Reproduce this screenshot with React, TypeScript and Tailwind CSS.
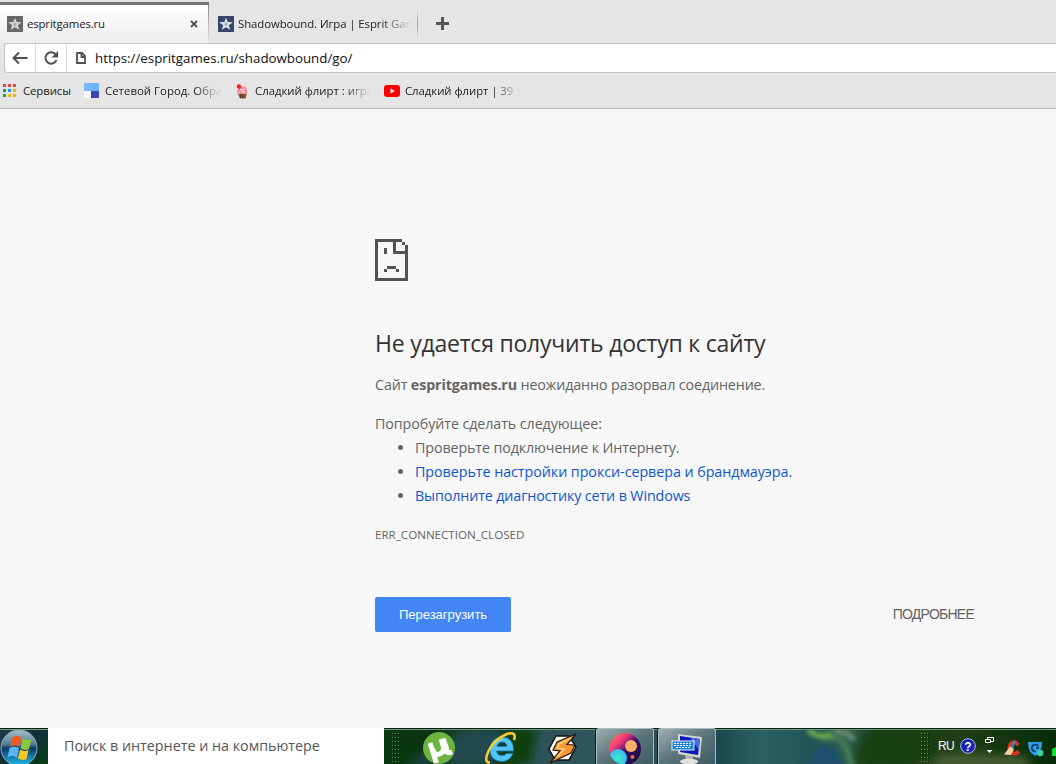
import React, { ReactNode } from 'react';

function StarIcon({ bg, fill }: { bg: string; fill: string }) {
  return (
    <svg width="16" height="16" viewBox="0 0 16 16" className="shrink-0">
      <rect width="16" height="16" fill={bg} />
      <path d="M8 1.8 9.7 6 15 6.3 10.8 9.2 12.3 13.8 8 11.3 3.7 13.8 5.2 9.2 1 6.3 6.3 6Z" fill={fill} />
      <path d="M8 5.5 8.7 7.5 10.5 7.7 9 8.8 9.5 10.5 8 9.5 6.5 10.5 7 8.8 5.5 7.7 7.3 7.5Z" fill="#a8a8a8" />
    </svg>
  );
}

function AppsIcon() {
  const colors = ['#f44336', '#f44336', '#f44336', '#0f9d58', '#2196f3', '#ffb300', '#0f9d58', '#ffb300', '#ffb300'];
  return (
    <svg width="13" height="13" viewBox="0 0 13 13" className="shrink-0">
      {colors.map((c, i) => (
        <rect key={i} x={(i % 3) * 5} y={Math.floor(i / 3) * 5} width="3" height="3" fill={c} />
      ))}
    </svg>
  );
}

function CityIcon() {
  return (
    <svg width="15" height="15" viewBox="0 0 15 15" className="shrink-0">
      <rect width="7" height="8" fill="#7ab6f8" />
      <rect x="7" width="8" height="8" fill="#6cb2ff" />
      <rect y="8" width="7" height="7" fill="#f4f8ff" />
      <rect x="7" y="8" width="8" height="7" fill="#3a49b0" />
    </svg>
  );
}

function CupcakeIcon() {
  return (
    <svg width="12" height="16" viewBox="0 0 12 16" className="mt-[2px] shrink-0">
      <path d="M1.5 9 11 9 9.5 14.5 4 14.5Z" fill="#8a5a3c" />
      <path d="M4.5 10v4M7 10v4" stroke="#5b3524" />
      <path d="M1 6 4 3 9 2.5 11 6 11 10 2 10Z" fill="#f4869c" />
      <path d="M4 5.5h2v2h2v2M8 4v2M3 8.5h1" stroke="#fff0f4" fill="none" />
      <circle cx="3" cy="2.5" r="2.2" fill="#f2202c" />
    </svg>
  );
}

function YoutubeIcon() {
  return (
    <svg width="16" height="12" viewBox="0 0 16 12" className="mt-[2px] shrink-0">
      <rect width="16" height="12" rx="3" fill="#f00" />
      <path d="M6.5 3.5v5L10.8 6Z" fill="#fff" />
    </svg>
  );
}

function SadPageIcon() {
  return (
    <svg width="33" height="42" viewBox="0 0 11 14" shapeRendering="crispEdges" fill="#535353">
      <path d="M0 0h9v1H1v12h9V2h1v12H0Z" />
      <path d="M6 1h1v3h3v1H6ZM9 1h1v1H9Z" />
      <path d="M3 3h1v2H3ZM4 9h3v1H4ZM3 10h1v1H3ZM7 10h1v1H7Z" />
    </svg>
  );
}

function BookmarkItem({ icon, label, className }: { icon: ReactNode; label: string; className: string }) {
  return (
    <div className={`flex items-center whitespace-nowrap text-[11.4px] text-[#222] ${className}`}>
      {icon}
      <span>{label}</span>
    </div>
  );
}

function TabStrip() {
  return (
    <div className="flex h-[43px] items-start pt-[2px]">
      <div className="flex h-[41px] w-[209px] items-center border-t-[3px] border-[#737373] bg-linear-to-b from-white to-[#ececec] pl-[7px]">
        <StarIcon bg="#686868" fill="#d6d6d6" />
        <span className="ml-1 flex-1 text-[11.4px] tracking-[-0.14px] text-[#222]">espritgames.ru</span>
        <svg width="8" height="8" viewBox="0 0 8 8" className="mr-[10px]" stroke="#505050" strokeWidth="1.8">
          <path d="M1 1 7 7M7 1 1 7" />
        </svg>
        <div className="h-full w-px bg-linear-to-b from-[#8a8a8a] to-[#e5e5e5]" />
      </div>
      <div className="flex h-[41px] w-[209px] items-center pt-[3px] pl-[9px]">
        <StarIcon bg="#36466b" fill="#dfe4ee" />
        <div className="ml-1 w-[174px] whitespace-nowrap text-[11.4px] tracking-[-0.08px] text-[#222] mask-r-from-82% mask-r-to-100%">
          Shadowbound. Игра | Esprit Gam
        </div>
        <div className="ml-auto h-[30px] w-px bg-linear-to-b from-[#e5e5e5] via-[#a0a0a0] to-[#e5e5e5]" />
      </div>
      <svg width="13" height="13" viewBox="0 0 13 13" className="mt-[15px] ml-[18px]" fill="#555">
        <path d="M5 0h3v5h5v3H8v5H5V8H0V5h5Z" />
      </svg>
    </div>
  );
}

function AddressBar() {
  return (
    <div className="flex h-[30px] pl-1">
      <div className="flex flex-1 rounded-l-[3px] border border-r-0 border-[#c4c4c4] bg-white">
        <div className="flex w-[31px] items-center justify-center border-r border-[#d8d8d8]">
          <svg width="16" height="14" viewBox="0 0 16 14" fill="none" stroke="#505050" strokeWidth="2">
            <path d="M7 1.5 1.5 7 7 12.5M2 7h13.5" />
          </svg>
        </div>
        <div className="flex w-[31px] items-center justify-center border-r border-[#d8d8d8]">
          <svg width="16" height="16" viewBox="0 0 16 16" fill="none" stroke="#505050" strokeWidth="2">
            <path d="M12.5 4.2A5.7 5.7 0 1 0 13.5 10" />
            <path d="M15 1v6.5H8.5Z" fill="#505050" stroke="none" />
          </svg>
        </div>
        <div className="flex items-center pl-[9px]">
          <svg width="10" height="12" viewBox="0 0 10 12" fill="none" stroke="#505050" strokeWidth="1.8">
            <path d="M1 1h5l3 3v7H1ZM5.5 1v4H9" />
          </svg>
          <span className="mt-[2px] ml-[9px] text-[13.3px] text-[#111]">https://espritgames.ru/shadowbound/go/</span>
        </div>
      </div>
    </div>
  );
}

function BookmarksBar() {
  return (
    <div className="flex h-[36px] items-center border-b border-[#bcbcbc] pl-[3px]">
      <BookmarkItem icon={<AppsIcon />} label="Сервисы" className="w-[81px] gap-[7px] tracking-[-0.1px]" />
      <BookmarkItem icon={<CityIcon />} label="Сетевой Город. Обра" className="w-[138px] gap-[6px] tracking-[0.02px] mask-r-from-80% mask-r-to-100%" />
      <BookmarkItem icon={<CupcakeIcon />} label="Сладкий флирт : игра" className="ml-[14px] w-[135px] gap-[7px] tracking-[-0.02px] mask-r-from-80% mask-r-to-100%" />
      <BookmarkItem icon={<YoutubeIcon />} label="Сладкий флирт | 39 э" className="ml-[13px] w-[136px] gap-[5px] tracking-[-0.06px] mask-r-from-80% mask-r-to-100%" />
    </div>
  );
}

function ErrorPage() {
  return (
    <div className="flex-1 bg-[#f7f7f7] pt-[130px] pl-[375px] text-[14.3px] leading-[24px] whitespace-nowrap text-[#646464]">
      <SadPageIcon />
      <h1 className="mt-[47px] text-[23px] leading-[30px] tracking-[-0.22px] text-[#333]">Не удается получить доступ к сайту</h1>
      <p className="mt-[15px] tracking-[-0.13px]">
        Сайт <b>espritgames.ru</b> неожиданно разорвал соединение.
      </p>
      <p className="mt-[15px] tracking-[-0.09px]">Попробуйте сделать следующее:</p>
      <ul className="list-disc pl-10 tracking-[-0.12px]">
        <li>Проверьте подключение к Интернету.</li>
        <li><a className="tracking-[-0.05px] text-[#1155cc]">Проверьте настройки прокси-сервера и брандмауэра.</a></li>
        <li><a className="text-[#1155cc]">Выполните диагностику сети в Windows</a></li>
      </ul>
      <div className="mt-[15px] text-[11.6px]">ERR_CONNECTION_CLOSED</div>
      <div className="mt-[50px] flex h-[35px] w-[599px] items-center justify-between">
        <button className="h-[35px] w-[136px] rounded-[2px] bg-[#4285f4] font-['Liberation_Sans'] text-[13px] text-white">Перезагрузить</button>
        <span className="pb-[2px] font-['Liberation_Sans'] text-[14px] tracking-[-0.75px]">ПОДРОБНЕЕ</span>
      </div>
    </div>
  );
}

function WindowsOrb() {
  return (
    <svg width="48" height="36" viewBox="0 0 48 36" className="shrink-0">
      <defs>
        <linearGradient id="orbBg" x1="0" y1="0" x2="0" y2="1">
          <stop offset="0" stopColor="#a9bdc6" />
          <stop offset=".4" stopColor="#4f7d98" />
          <stop offset=".5" stopColor="#0b3a66" />
          <stop offset="1" stopColor="#19c0f0" />
        </linearGradient>
        <linearGradient id="startBg" x1="0" y1="0" x2="1" y2="1">
          <stop offset="0" stopColor="#1c3a48" />
          <stop offset=".5" stopColor="#10303a" />
          <stop offset="1" stopColor="#063d14" />
        </linearGradient>
      </defs>
      <rect width="48" height="36" fill="url(#startBg)" />
      <path d="M0 .5h48" stroke="#0b1f12" />
      <path d="M0 1.5h48" stroke="#76a088" />
      <circle cx="19" cy="20" r="18" fill="url(#orbBg)" stroke="#8fa9b5" />
      <path d="M12 10q5-3.5 9.5-.5l-2 9q-5-2.5-9.5 0Z" fill="#ee5a24" />
      <path d="M22.5 10.5q4 2.5 9 .5l-2.5 10q-4 2-8.5-.5Z" fill="#8cc63f" />
      <path d="M9.5 20q5-2.5 9.5 0l-2 9.5q-5-3-9.5 0Z" fill="#5ab4f0" />
      <path d="M20 21.5q4 2.5 8.5.5l-2 9q-4 2-8.5-.5Z" fill="#fcc424" />
    </svg>
  );
}

function Grip() {
  return (
    <svg width="9" height="32" viewBox="0 0 9 32" className="shrink-0">
      {[0, 4, 8, 12, 16, 20, 24, 28].map((y) => (
        <g key={y} fill="#6f8a6c">
          <rect x="0" y={y} width="1" height="1" />
          <rect x="3" y={y} width="1" height="1" />
          <rect x="6" y={y} width="1" height="1" />
          <path d="M1 0h1v1H1ZM4 0h1v1H4ZM7 0h1v1H7Z" transform={`translate(0 ${y + 1})`} fill="#001200" />
        </g>
      ))}
    </svg>
  );
}

function TaskbarBackdrop() {
  return (
    <svg width="672" height="36" viewBox="0 0 672 36" className="absolute inset-0">
      <defs>
        <linearGradient id="wall" x1="0" y1="0" x2="1" y2="0">
          <stop offset="0" stopColor="#0a3a0f" />
          <stop offset=".07" stopColor="#0a3210" />
          <stop offset=".12" stopColor="#1c4632" />
          <stop offset=".18" stopColor="#0e3c1c" />
          <stop offset=".22" stopColor="#2c5358" />
          <stop offset=".34" stopColor="#2f5460" />
          <stop offset=".5" stopColor="#1b4a50" />
          <stop offset=".56" stopColor="#2a6264" />
          <stop offset=".64" stopColor="#205456" />
          <stop offset=".69" stopColor="#2c5f50" />
          <stop offset=".73" stopColor="#1a3e1c" />
          <stop offset=".86" stopColor="#1e3e14" />
          <stop offset="1" stopColor="#062c08" />
        </linearGradient>
        <filter id="soft" x="-20%" y="-50%" width="140%" height="200%">
          <feGaussianBlur stdDeviation="4" />
        </filter>
        <filter id="softer" x="-20%" y="-50%" width="140%" height="200%">
          <feGaussianBlur stdDeviation="2" />
        </filter>
      </defs>
      <rect width="672" height="36" fill="url(#wall)" />
      <g filter="url(#soft)">
        <path d="M20 36 90 0h30L110 36Z" fill="#24484e" />
        <path d="M130 0h24l-8 36h-30Z" fill="#0c4010" />
        <path d="M560 26 640 28 650 40H530Z" fill="#4a5e34" />
        <path d="M472 38q-2-24 20-32h60v30Z" fill="#174010" />
      </g>
      <g filter="url(#softer)">
        <path d="M424 3Q440 12 450 10T468 38" fill="none" stroke="#4a8058" strokeWidth="5" />
        <path d="M426 38Q430 16 442 18T458 38Z" fill="#1b4f70" />
        <path d="M450 2Q464 4 470 12" fill="none" stroke="#6a8c70" strokeWidth="6" />
        <path d="M424 2q10 9 24 4" fill="none" stroke="#70ae48" strokeWidth="5" />
      </g>
      <path d="M0 .5h672" stroke="#0b1f12" />
      <path d="M0 1.5h672" stroke="#6d9a78" />
    </svg>
  );
}

function TaskButton({ children }: { children: ReactNode }) {
  return (
    <div className="flex h-[36px] w-[58px] items-center justify-center rounded-t-[3px] border border-b-0 border-[#a8bcbc] bg-linear-to-br from-[#9fb0b2] via-[#5a7479] to-[#3f5c63] shadow-[-1px_0_0_#0c1c20]">
      {children}
    </div>
  );
}

function Taskbar() {
  return (
    <div className="flex h-[36px]">
      <WindowsOrb />
      <div className="flex w-[336px] items-center bg-white pl-4 text-[14.3px] whitespace-nowrap text-[#555]">
        Поиск в интернете и на компьютере
      </div>
      <div className="relative flex-1 overflow-hidden">
        <TaskbarBackdrop />
        <div className="relative flex h-[36px] pl-[8px]">
          <div className="pt-[5px]"><Grip /></div>
          {/* uTorrent */}
          <svg width="32" height="32" viewBox="0 0 32 32" className="mt-1 ml-[22px]">
            <circle cx="16" cy="16" r="16" fill="#6db33f" />
            <path d="M7 11 13.5 31M9.5 17Q12 24 16.5 22T20.5 15L18 7M20.5 15Q23 22.5 29 20" fill="none" stroke="#fff" strokeWidth="5" />
            <path d="M20.5 6.5 24.5 18" stroke="#fff" strokeWidth="4" />
          </svg>
          {/* Internet Explorer */}
          <svg width="32" height="32" viewBox="0 0 32 32" className="mt-1 ml-[30px]">
            <path d="M28.5 19H11.5Q12 23.5 17 23.5 20 23.5 21.5 21.5H28Q25 29.5 16.5 29.5 5 28.5 5 17.5 6 5.5 17 5 29 5.5 28.5 19ZM12 14.5H22Q21.5 10 17 10 13 10 12 14.5Z" fill="#55c6f4" stroke="#1578b8" strokeWidth=".8" />
            <path d="M5 30.5Q-2 31 4 18 10 7 22 2 32-1 29 8" fill="none" stroke="#fcd02c" strokeWidth="2.5" />
          </svg>
          {/* Winamp */}
          <svg width="32" height="32" viewBox="0 0 32 32" className="mt-1 ml-[30px]">
            <path d="M2 17 9 4 22 4 29 15 22 28 8 28Z" fill="#fff" stroke="#111" strokeWidth="1.5" />
            <path d="M29 2 10 10 6 18 13 19 3 31 24 21 28 13 20 12.5Z" fill="#f79a35" stroke="#2a1608" strokeWidth="1.2" />
            <path d="M24 6 12 12 10 16 17 17 10 25" fill="none" stroke="#ffd08a" strokeWidth="1.5" />
          </svg>
          <div className="ml-[17px] flex gap-[4px]">
            <TaskButton>
              <svg width="34" height="34" viewBox="0 0 34 34" className="mt-1">
                <defs>
                  <linearGradient id="planet" x1=".1" y1="0" x2=".9" y2=".8">
                    <stop offset="0" stopColor="#ff8a4a" />
                    <stop offset=".35" stopColor="#f0367c" />
                    <stop offset=".6" stopColor="#3a0f6a" />
                    <stop offset="1" stopColor="#1c0a44" />
                  </linearGradient>
                  <radialGradient id="moon">
                    <stop offset="0" stopColor="#40f0c8" />
                    <stop offset="1" stopColor="#38b8f0" />
                  </radialGradient>
                  <clipPath id="planetClip"><circle cx="17" cy="17" r="16" /></clipPath>
                </defs>
                <g clipPath="url(#planetClip)">
                  <rect width="34" height="34" fill="url(#planet)" />
                  <circle cx="10" cy="26" r="9" fill="url(#moon)" />
                  <circle cx="23" cy="14" r="6" fill="#ffb066" />
                  <circle cx="24.5" cy="25" r="2" fill="#f07820" />
                </g>
              </svg>
            </TaskButton>
            <TaskButton>
              <svg width="32" height="34" viewBox="0 0 32 34" className="mt-1">
                <path d="M7 2 31 5 29 26 7 22Z" fill="#d6d6d0" />
                <path d="M9 4 29 7 27 23 9 20Z" fill="#0a18b8" />
                <path d="M19 5.5 29 7 28 18Z" fill="#4b6be0" />
                <path d="M14 23 22 25 21 29 15 28Z" fill="#b8b8b4" />
                <ellipse cx="18" cy="29.5" rx="9" ry="3" fill="#e0e0dc" />
                <rect x="1" y="9" width="22" height="9" fill="#1b86d8" stroke="#e8f2fa" />
                <path d="M3 11.5h18M3 13.5h18M5 15.5h14" stroke="#fff" strokeDasharray="2 1" />
              </svg>
            </TaskButton>
          </div>
          {/* Tray */}
          <div className="ml-auto flex h-[36px] text-white">
            <div className="pt-[5px]"><Grip /></div>
            <span className="mt-[8px] ml-[8px] w-[16px] font-['Liberation_Sans'] text-[12px] leading-[20px] tracking-[-0.6px]">RU</span>
            <svg width="16" height="16" viewBox="0 0 16 16" className="mt-[10px] ml-[6px]">
              <circle cx="8" cy="8" r="7.3" fill="#1420b8" stroke="#b8c0e0" />
              <text x="8" y="12.5" textAnchor="middle" fontSize="12" fontWeight="700" fontFamily="Liberation Sans" fill="#fff">?</text>
            </svg>
            <svg width="9" height="18" viewBox="0 0 9 18" className="mt-[8px] ml-[9px]" fill="none" stroke="#fff">
              <path d="M2.5 3V1.5h6v4H6M.5 3.5h5v3h-5Z" />
              <path d="M1.5 14h6l-3 3Z" fill="#fff" stroke="none" />
            </svg>
            <svg width="17" height="16" viewBox="0 0 17 16" className="mt-[12px] ml-[10px]">
              <path d="M14.5 5Q10.5 0 6.5 4 4 9 7 12 10 15.5 15 11.5" fill="none" stroke="#d8321e" strokeWidth="3.8" />
              <path d="M10.5 1 8 8" stroke="#3486c8" strokeWidth="2.5" />
              <path d="M6 6.5 10 9 7 15 0 14.5Z" fill="#f2cfa0" />
            </svg>
            <svg width="16" height="16" viewBox="0 0 16 16" className="mt-[13px] ml-[7px]">
              <path d="M0 1 14 1Q14 11 7.5 15 0 12 0 1Z" fill="#2aa0ec" />
              <path d="M10.5 5.5A3.5 3.5 0 1 0 7.5 10.5M8 7h3" fill="none" stroke="#0c3654" strokeWidth="1.5" />
              <circle cx="12.2" cy="12" r="3.2" fill="#3ad0a0" />
            </svg>
            <svg width="5" height="12" viewBox="0 0 5 12" className="mt-[18px] ml-[7px]">
              <path d="M1 3 5 1v9H1Z" fill="#0cdc3c" />
            </svg>
          </div>
        </div>
      </div>
    </div>
  );
}

export default function App() {
  return (
    <div className="flex h-[764px] w-[1056px] flex-col overflow-hidden bg-[#e5e5e5] font-['Open_Sans','Noto_Sans',sans-serif]">
      <TabStrip />
      <AddressBar />
      <BookmarksBar />
      <ErrorPage />
      <Taskbar />
    </div>
  );
}
